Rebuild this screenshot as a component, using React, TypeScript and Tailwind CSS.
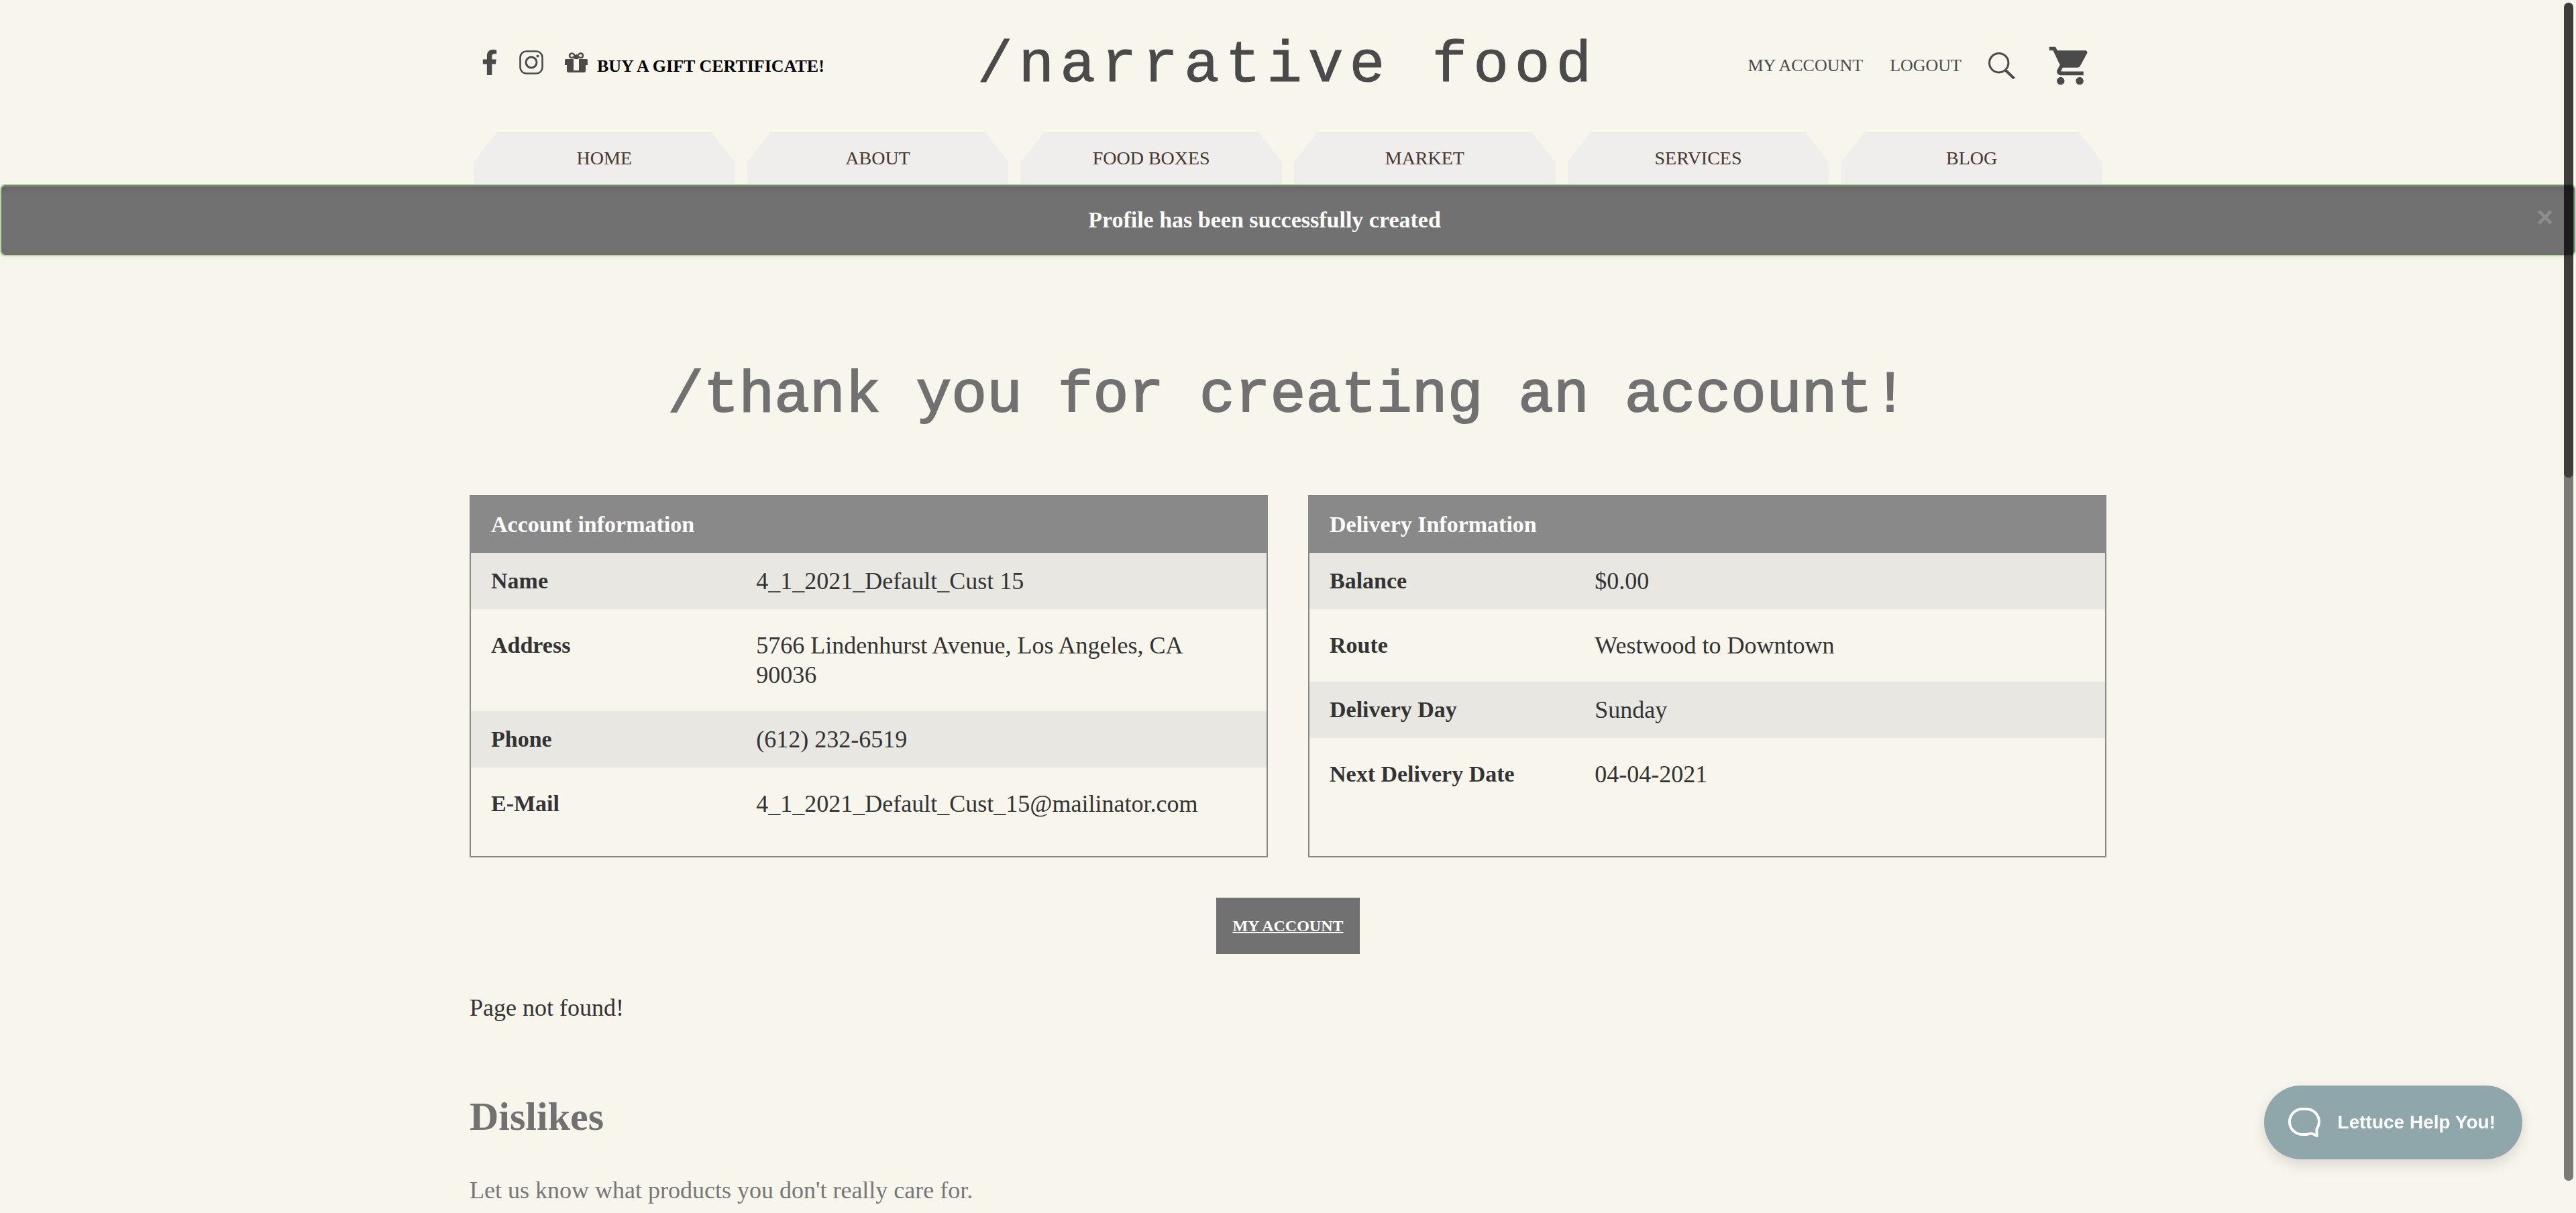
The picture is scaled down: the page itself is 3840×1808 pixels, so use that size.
import React from "react";
import { FaFacebookF } from "react-icons/fa";
import { MdShoppingCart } from "react-icons/md";

const tabs = ["HOME", "ABOUT", "FOOD BOXES", "MARKET", "SERVICES", "BLOG"];

const account: [string, string][] = [
  ["Name", "4_1_2021_Default_Cust 15"],
  ["Address", "5766 Lindenhurst Avenue, Los Angeles, CA 90036"],
  ["Phone", "(612) 232-6519"],
  ["E-Mail", "4_1_2021_Default_Cust_15@mailinator.com"],
];

const delivery: [string, string][] = [
  ["Balance", "$0.00"],
  ["Route", "Westwood to Downtown"],
  ["Delivery Day", "Sunday"],
  ["Next Delivery Date", "04-04-2021"],
];

function InstagramIcon() {
  return (
    <svg viewBox="0 0 36 36" className="size-9" fill="none" stroke="currentColor" aria-hidden="true">
      <rect x="1.5" y="1.5" width="33" height="33" rx="9" strokeWidth="2.6" />
      <circle cx="18" cy="18" r="8" strokeWidth="3" />
      <circle cx="27.5" cy="8.5" r="2" fill="currentColor" stroke="none" />
    </svg>
  );
}

function GiftIcon() {
  return (
    <svg viewBox="0 0 34 30" className="h-[30px] w-[34px]" aria-hidden="true">
      <path
        d="M17 9.5C15.5 5.500 13.500 1.500 10.500 1.500C8 1.500 7 3.300 7 5C7 7.500 9 8.500 11.500 7.800C13.800 7.200 15.700 5.500 17 4.500C18.300 5.500 20.200 7.200 22.500 7.800C25 8.500 27 7.500 27 5C27 3.300 26 1.500 23.500 1.500C20.500 1.500 18.500 5.500 17 9.500Z"
        fill="none"
        stroke="currentColor"
        strokeWidth="2.6"
      />
      <path
        d="M1.500 10H32.500Q34 10 34 11.500V19H0V11.500Q0 10 1.500 10ZM3 19H31V27.500Q31 30 28.500 30H5.500Q3 30 3 27.500Z"
        fill="currentColor"
      />
      <path d="M13 10H21V27H13Z" fill="#f8f5ed" />
      <path d="M13 10H21L19.500 8H14.500Z" fill="currentColor" />
    </svg>
  );
}

function SearchIcon() {
  return (
    <svg viewBox="0 0 40 40" className="size-10" fill="none" stroke="currentColor" aria-hidden="true">
      <circle cx="15.700" cy="15.700" r="14.200" strokeWidth="3" />
      <path d="M26 27L38.500 39" strokeWidth="4" />
    </svg>
  );
}

function ChatIcon() {
  return (
    <svg
      viewBox="0 0 48 44"
      className="h-11 w-12"
      fill="none"
      stroke="currentColor"
      strokeWidth="4"
      strokeLinejoin="round"
      aria-hidden="true"
    >
      <path d="M21 2H27A19 19 0 0 1 46 21C46 25.500 44.500 29 42.500 32C42 35.500 43 39 43 42C40 41 37 38.500 34 38.500C31.500 38.500 30 40 27 40H21A19 19 0 0 1 2 21A19 19 0 0 1 21 2Z" />
    </svg>
  );
}

function InfoTable({ title, rows }: { title: string; rows: [string, string][] }) {
  return (
    <div className="flex-1 border-2 border-[#898989] pb-6">
      <table className="w-full table-fixed border-collapse text-left text-[36px] leading-[44px]">
        <thead>
          <tr className="bg-[#898989] text-[34px] text-white">
            <th colSpan={3} scope="colgroup" className="px-[30px] py-5 font-bold">
              {title}
            </th>
          </tr>
        </thead>
        <tbody>
          {rows.map(([label, value]) => (
            <tr key={label} className="align-top odd:bg-[#e8e7e2] odd:[&>*]:py-5 even:[&>*]:py-8">
              <th scope="row" className="px-[30px] text-[34px] font-bold">
                {label}
              </th>
              <td colSpan={2} className="px-[30px]">
                {value}
              </td>
            </tr>
          ))}
        </tbody>
      </table>
    </div>
  );
}

export default function App() {
  return (
    <div className="min-h-screen bg-[#f8f5ed] font-['Liberation_Serif',serif] text-[#333333]">
      <header className="mx-auto w-full max-w-[2440px]">
        <div className="grid grid-cols-[1fr_auto_1fr] items-center pt-[38px] pr-5 pb-9 pl-[18px] text-[#4b4a4b]">
          <div className="flex items-center gap-8 pb-[10px]">
            <a href="#facebook" aria-label="Facebook">
              <FaFacebookF className="h-[38px] w-6" />
            </a>
            <a href="#instagram" aria-label="Instagram">
              <InstagramIcon />
            </a>
            <a href="#gift" className="flex items-center gap-[14px]">
              <GiftIcon />
              <span className="pt-3 text-[26px] leading-8 font-bold text-black">BUY A GIFT CERTIFICATE!</span>
            </a>
          </div>
          <a
            href="#home"
            className="font-['Liberation_Mono',monospace] text-[88px] leading-[120px] tracking-widest text-[#4b4a4b] [-webkit-text-stroke:1px_#4b4a4b]"
          >
            /narrative food
          </a>
          <div className="flex items-center justify-end gap-10 text-[26px] leading-8">
            <a href="#account">MY ACCOUNT</a>
            <a href="#logout">LOGOUT</a>
            <button type="button" aria-label="Search">
              <SearchIcon />
            </button>
            <a href="#cart" aria-label="Shopping cart" className="pl-2">
              <MdShoppingCart className="size-[68px]" />
            </a>
          </div>
        </div>
        <nav className="flex gap-[18px] px-[6px]">
          {tabs.map((tab) => (
            <a
              key={tab}
              href="#"
              className="flex-1 border-t-2 border-[#fffde4] bg-[#efeeed] pt-[22px] pb-5 text-center text-[28px] leading-9 text-[#46382a] [clip-path:polygon(37px_0,calc(100%-37px)_0,100%_48px,100%_100%,0_100%,0_48px)]"
            >
              {tab}
            </a>
          ))}
        </nav>
      </header>

      <div
        role="alert"
        className="relative rounded-lg border-2 border-[#b5d8a3] bg-[#717171] py-[30px] pr-[100px] pl-[30px] text-center text-[34px] leading-[44px] font-bold text-white shadow-[inset_0_2px_0_#838383,inset_0_10px_10px_-4px_#666666,0_2px_4px_rgba(0,0,0,0.05)]"
      >
        Profile has been successfully created
        <button
          type="button"
          aria-label="Close"
          className="absolute top-[26px] right-8 font-['Liberation_Sans',sans-serif] text-[42px] leading-[44px] text-[#8d8d8d]"
        >
          ×
        </button>
      </div>

      <main className="mx-auto w-full max-w-[2440px] pt-40">
        <h1 className="text-center font-['Liberation_Mono',monospace] text-[88px] leading-[96px] text-[#717171] [-webkit-text-stroke:2px_#717171]">
          /thank you for creating an account!
        </h1>
        <div className="mt-[100px] flex gap-[60px]">
          <InfoTable title="Account information" rows={account} />
          <InfoTable title="Delivery Information" rows={delivery} />
        </div>
        <div className="mt-[60px] flex justify-center">
          <a
            href="#account"
            className="bg-[#717171] px-6 py-5 text-[24px] leading-[44px] font-bold text-white underline decoration-2"
          >
            MY ACCOUNT
          </a>
        </div>
        <p className="mt-[58px] text-[36px] leading-[44px]">Page not found!</p>
        <h2 className="mt-[104px] text-[60px] leading-[72px] font-bold text-[#717171]">Dislikes</h2>
        <p className="mt-[52px] text-[36px] leading-[44px] text-[#777777]">
          Let us know what products you don't really care for.
        </p>
      </main>

      <button
        type="button"
        className="fixed right-20 bottom-20 flex items-center gap-[26px] rounded-full bg-[#8fa7aa] px-9 py-[33px] font-['Liberation_Sans',sans-serif] text-[28px] leading-[44px] font-bold text-white shadow-[0_8px_20px_rgba(0,0,0,0.12)]"
      >
        <ChatIcon />
        <span className="pr-1">Lettuce Help You!</span>
      </button>

      <div className="fixed top-1 right-1 bottom-12 w-[14px] rounded-full bg-black/50" aria-hidden="true">
        <div className="h-[708px] rounded-full bg-black/50" />
      </div>
    </div>
  );
}
